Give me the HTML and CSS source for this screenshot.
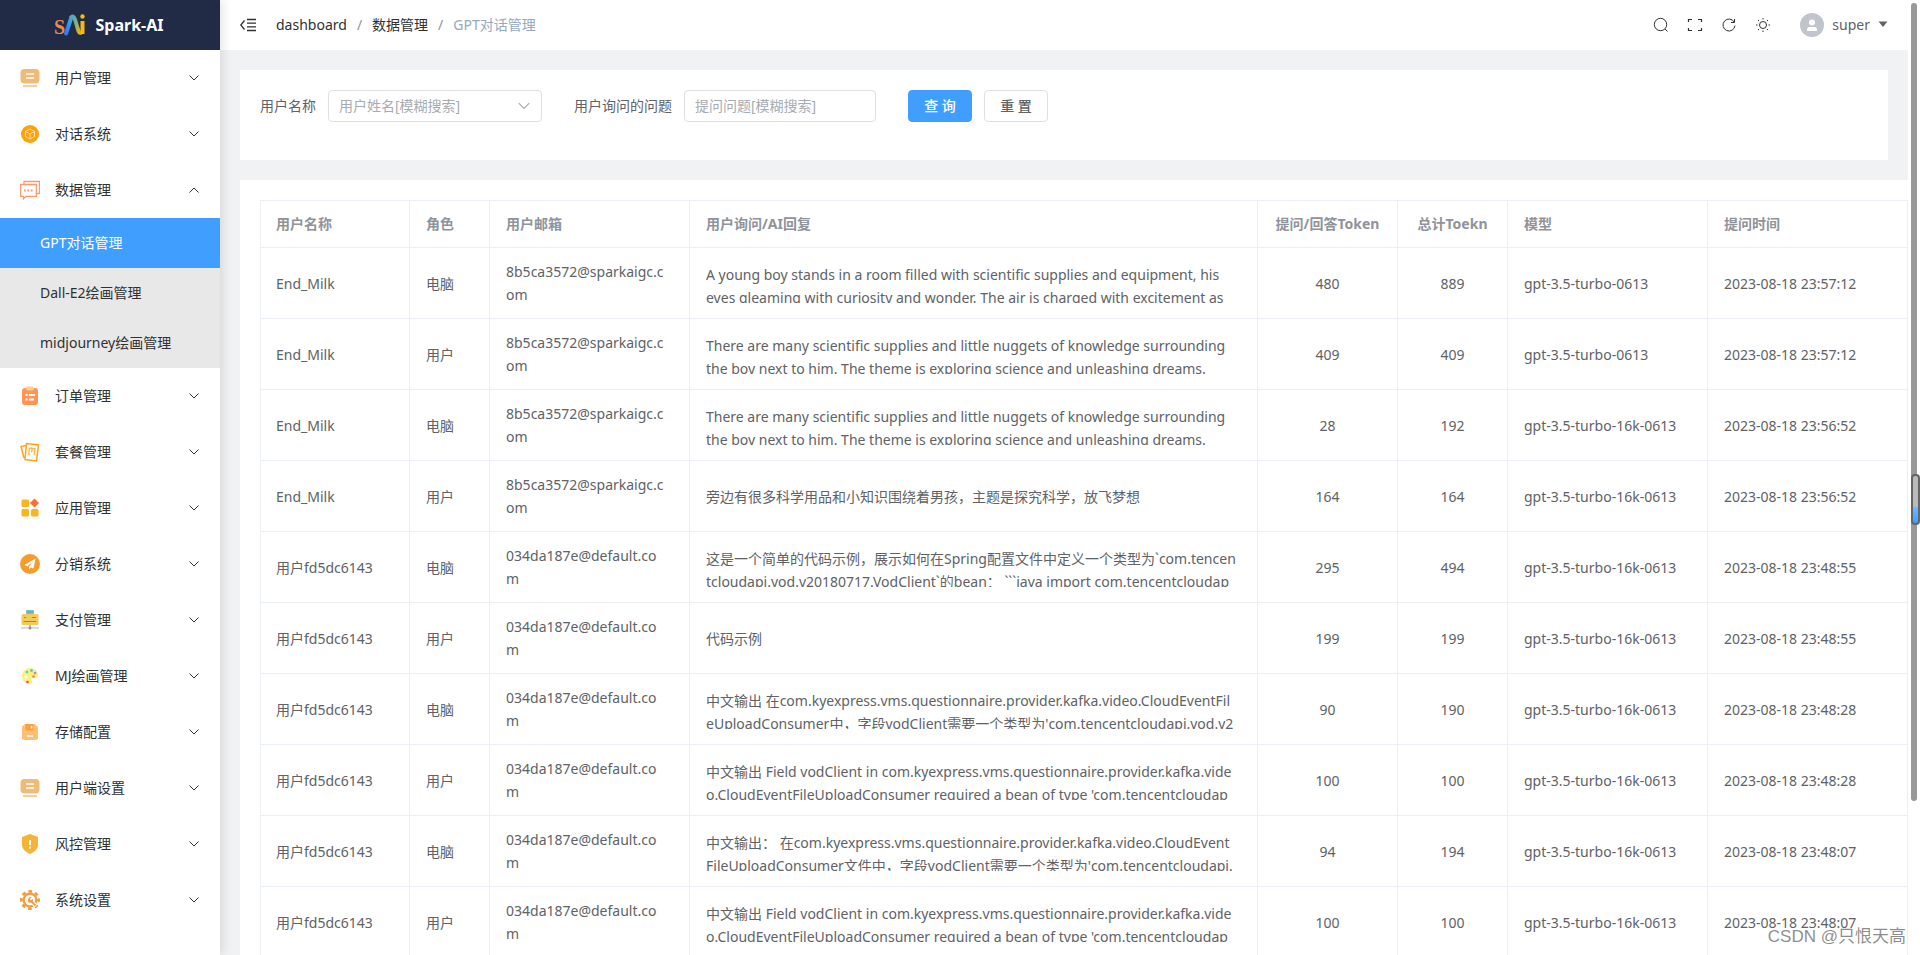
FILE: index.html
```html
<!DOCTYPE html>
<html lang="zh-CN">
<head>
<meta charset="utf-8">
<title>Spark-AI</title>
<link rel="stylesheet" href="styles.css">
</head>
<body>
<svg class="defs" aria-hidden="true">
  <symbol id="down" viewBox="0 0 12 12"><path d="M1.500 3.500 6 8l4.500-4.500" fill="none" stroke="currentColor"/></symbol>
  <symbol id="card" viewBox="0 0 20 20"><rect x="0.500" y="1" width="19" height="14.500" rx="4" fill="#efbb78"/><path d="M6 6h8M6 10h8" stroke="#fff" stroke-width="1.400"/><path d="M3 18h14" stroke="#efbb78" stroke-width="1.400"/></symbol>
</svg>
<div class="app">
  <aside class="sidebar">
    <div class="brand">
      <svg class="logo" viewBox="0 0 32 24" aria-hidden="true">
        <defs>
          <linearGradient id="g1" x1="0" y1="1" x2="1" y2="0"><stop offset="0" stop-color="#2b7cf6"/><stop offset="1" stop-color="#3ca5e8"/></linearGradient>
          <linearGradient id="g2" x1="0" y1="0" x2="1" y2="1"><stop offset="0" stop-color="#46a9c8"/><stop offset=".5" stop-color="#8fae6c"/><stop offset="1" stop-color="#f7b500"/></linearGradient>
        </defs>
        <text x="0" y="21" class="logo-s">S</text>
        <path d="M12 20.500 17 5.500" stroke="url(#g1)" stroke-width="4" stroke-linecap="round"/>
        <path d="M16.500 5Q19.500 1.500 21 6.500L24.500 18q1 2.500 3 1.500" fill="none" stroke="url(#g2)" stroke-width="4"/>
        <path d="M28.500 8v13" stroke="#f8b913" stroke-width="4"/>
        <circle cx="28.500" cy="3.500" r="2.200" fill="#f8b913"/>
      </svg>
      <span>Spark-AI</span>
    </div>
    <nav class="menu">
      <a class="item" href="#"><svg class="ico"><use href="#card"/></svg><span>用户管理</span><svg class="arrow"><use href="#down"/></svg></a>
      <a class="item" href="#"><svg class="ico" viewBox="0 0 20 20"><circle cx="10" cy="10" r="9" fill="#ffa10a"/><path d="m10 5 4.500 2.500v5L10 15l-4.500-2.500v-5zM5.500 7.500 10 10l4.500-2.500M10 10v5" fill="none" stroke="#ffe2b0"/></svg><span>对话系统</span><svg class="arrow"><use href="#down"/></svg></a>
      <a class="item" href="#"><svg class="ico" viewBox="0 0 20 20"><path d="M4 4V1.500h15.500v12H17M.7 4.500h15.600v11.800H6l-2.500 2.500v-2.500H.7z" fill="none" stroke="#fb9a6d" stroke-width="1.300"/><path d="M4 10.500h9" stroke="#fb9a6d" stroke-width="1.800" stroke-dasharray="1.800 1.600"/></svg><span>数据管理</span><svg class="arrow up"><use href="#down"/></svg></a>
      <div class="sub">
        <a class="sub-item active" href="#">GPT对话管理</a>
        <a class="sub-item" href="#">Dall-E2绘画管理</a>
        <a class="sub-item" href="#">midjourney绘画管理</a>
      </div>
      <a class="item" href="#"><svg class="ico" viewBox="0 0 20 20"><rect x="2" y="2" width="16" height="17" rx="3" fill="#ff9552"/><rect x="6" y="0.500" width="8" height="4" rx="2" fill="#ffd08a"/><path d="M5.500 9h2M9 9h6M5.500 13.500h2M9 13.500h5" stroke="#fff" stroke-width="2"/></svg><span>订单管理</span><svg class="arrow"><use href="#down"/></svg></a>
      <a class="item" href="#"><svg class="ico" viewBox="0 0 20 20"><path d="m6.500 1.500 12 1.500-2 16L5 17.500zM5.500 3.500 1 4.500 4 16" fill="none" stroke="#ffa51c" stroke-width="1.500"/><path d="m9.500 6-.8 7M9.500 6l5.500.6-.8 6.500M12.200 6.400l-.6 4" fill="none" stroke="#ffb64b" stroke-width="1.400"/></svg><span>套餐管理</span><svg class="arrow"><use href="#down"/></svg></a>
      <a class="item" href="#"><svg class="ico" viewBox="0 0 20 20"><rect x="1.500" y="1.500" width="7.500" height="7.500" rx="1.500" fill="#ffb31a"/><rect x="1.500" y="11" width="7.500" height="7.500" rx="1.500" fill="#ffb31a"/><rect x="11" y="11" width="7.500" height="7.500" rx="1.500" fill="#ffb31a"/><path d="m14.500.5 4.500 4.500-4.500 4.500L10 5z" fill="#ff6f2c"/></svg><span>应用管理</span><svg class="arrow"><use href="#down"/></svg></a>
      <a class="item" href="#"><svg class="ico" viewBox="0 0 20 20"><circle cx="10" cy="10" r="10" fill="#f59c2f"/><path d="m15.500 4.500-11 6.500 3 1.200L13 7.500l-4 5.200V15.500l1.800-2 2.700 1z" fill="#fff"/></svg><span>分销系统</span><svg class="arrow"><use href="#down"/></svg></a>
      <a class="item" href="#"><svg class="ico" viewBox="0 0 20 20"><rect x="6" y="0" width="8" height="6" rx="1" fill="#79c3cf"/><path d="M7.500 2h5" stroke="#3f7f8b" stroke-dasharray="1 1"/><rect x="1.500" y="4" width="17" height="11" rx="1.500" fill="#f2cb5c"/><path d="M4 7.500h2M12 7.500h4M3.500 11.500h13" stroke="#a8893c"/><path d="M1 18h18" stroke="#b9b4b4"/><path d="M10 15v3" stroke="#8b7a80"/><circle cx="10" cy="18" r="1.500" fill="#a08c92"/></svg><span>支付管理</span><svg class="arrow"><use href="#down"/></svg></a>
      <a class="item" href="#"><svg class="ico" viewBox="0 0 20 20"><path d="M10 2c5 0 8.500 3 8 7.500-.4 3-3 3-4.500 2.500-2-.5-2.500 1-1.500 3s-.5 3.500-3 3C4.500 17.500 2 14 2 10.500 2 6 5.500 2 10 2z" fill="#fdf07b"/><circle cx="7" cy="6" r="1.300" fill="#4cd1ae"/><circle cx="11.500" cy="4.500" r="1.300" fill="#42b5ea"/><circle cx="15" cy="7" r="1.300" fill="#a98ad5"/><circle cx="13.500" cy="10.500" r="1.200" fill="#f4716d"/><circle cx="6" cy="11" r="1.800" fill="#fff"/><circle cx="7.500" cy="16" r="1.300" fill="#ef5350"/></svg><span>MJ绘画管理</span><svg class="arrow"><use href="#down"/></svg></a>
      <a class="item" href="#"><svg class="ico" viewBox="0 0 20 20"><path d="M5 2h9.500L18 5v10.500a2.500 2.500 0 0 1-2.500 2.500h-11A2.500 2.500 0 0 1 2 15.500v-11Z" fill="#ffbe73"/><path d="M5.500 2h8v5a1.500 1.500 0 0 1-1.500 1.500H7A1.500 1.500 0 0 1 5.500 7z" fill="#ff9f3e"/><path d="M11.500 4v2.500M7 14h6" stroke="#fff" stroke-width="1.500"/></svg><span>存储配置</span><svg class="arrow"><use href="#down"/></svg></a>
      <a class="item" href="#"><svg class="ico"><use href="#card"/></svg><span>用户端设置</span><svg class="arrow"><use href="#down"/></svg></a>
      <a class="item" href="#"><svg class="ico" viewBox="0 0 20 20"><path d="m10 0 8 3v8c0 4-3.500 7-8 9-4.500-2-8-5-8-9V3z" fill="#f7b337"/><path d="M10 6v5M10 12.500v2" stroke="#fff" stroke-width="2"/></svg><span>风控管理</span><svg class="arrow"><use href="#down"/></svg></a>
      <a class="item" href="#"><svg class="ico" viewBox="0 0 20 20"><circle cx="10" cy="10" r="6.300" fill="none" stroke="#f59c38" stroke-width="2.200"/><circle cx="10" cy="10" r="8.600" fill="none" stroke="#f59c38" stroke-width="2.800" stroke-dasharray="3.600 3.150" stroke-dashoffset="1.800"/><path d="m11 11 5 5" stroke="#fff" stroke-width="4"/><path d="M11.500 7.200 9.800 9l1.200 1.400L13 8.800a3.300 3.300 0 0 1-3.500 4A3 3 0 0 1 11.500 7.200z" fill="#f59c38"/><path d="m10.500 10.500 5 5" stroke="#f59c38" stroke-width="2"/></svg><span>系统设置</span><svg class="arrow"><use href="#down"/></svg></a>
    </nav>
  </aside>
  <div class="page">
    <header class="topbar">
      <button class="icon-btn" aria-label="折叠菜单"><svg width="16" height="16" viewBox="0 0 16 16"><path d="M4.500 3.500.8 8l3.700 4.500M7 2.500h9M7 6.200h9M7 9.800h9M7 13.500h9" fill="none" stroke="currentColor" stroke-width="1.300"/></svg></button>
      <nav class="crumbs"><a href="#">dashboard</a><i>/</i><a href="#">数据管理</a><i>/</i><span>GPT对话管理</span></nav>
      <div class="tools">
        <button class="icon-btn" aria-label="搜索"><svg width="16" height="16" viewBox="0 0 16 16"><circle cx="7.500" cy="7.500" r="6.200" fill="none" stroke="currentColor"/><path d="m12 12 2.500 2.500" stroke="currentColor"/></svg></button>
        <button class="icon-btn" aria-label="全屏"><svg width="16" height="16" viewBox="0 0 16 16"><path d="M1.500 5V2.500H5M11 2.500h3.500V5M14.500 11v2.500H11M5 13.500H1.500V11" fill="none" stroke="currentColor" stroke-width="1.200"/></svg></button>
        <button class="icon-btn" aria-label="刷新"><svg width="16" height="16" viewBox="0 0 16 16"><path d="M13.200 5A6 6 0 1 0 14 8.500M13.500 2v3.500H10" fill="none" stroke="currentColor"/></svg></button>
        <button class="icon-btn" aria-label="主题"><svg width="16" height="16" viewBox="0 0 16 16"><circle cx="8" cy="8" r="3.500" fill="none" stroke="currentColor"/><path d="M8 1v1.500M8 13.500V15M1 8h1.500M13.500 8H15M3 3l1 1M12 12l1 1M3 13l1-1M12 4l1-1" stroke="currentColor"/></svg></button>
        <button class="user"><svg width="24" height="24" viewBox="0 0 24 24"><circle cx="12" cy="12" r="12" fill="#c0c4cc"/><circle cx="12" cy="9.500" r="3" fill="#fff"/><path d="M7 18v-1.500q0-2.500 2.500-2.500h5q2.500 0 2.500 2.500V18z" fill="#fff"/></svg><span>super</span><svg width="10" height="10" viewBox="0 0 10 10"><path d="M.5 1.500h9L5 7z" fill="#606266"/></svg></button>
      </div>
    </header>
    <main class="content">
      <form class="search">
        <div class="field"><label for="name">用户名称</label><div class="select"><select id="name"><option>用户姓名[模糊搜索]</option></select><svg class="caret"><use href="#down"/></svg></div></div>
        <div class="field"><label for="question">用户询问的问题</label><input id="question" type="text" placeholder="提问问题[模糊搜索]"></div>
        <div class="field actions"><button class="btn primary" type="button">查 询</button><button class="btn" type="button">重 置</button></div>
      </form>
      <section class="table-card">
        <table>
          <colgroup><col class="w150"><col class="w80"><col class="w200"><col><col class="w140"><col class="w110"><col class="w200"><col class="w200"></colgroup>
          <thead><tr><th>用户名称</th><th>角色</th><th>用户邮箱</th><th>用户询问/AI回复</th><th class="num">提问/回答Token</th><th class="num">总计Toekn</th><th>模型</th><th>提问时间</th></tr></thead>
          <tbody>
            <tr><td>End_Milk</td><td>电脑</td><td>8b5ca3572@sparkaigc.c<br>om</td><td><div class="clip">A young boy stands in a room filled with scientific supplies and equipment, his<br>eyes gleaming with curiosity and wonder. The air is charged with excitement as</div></td><td class="num">480</td><td class="num">889</td><td>gpt-3.5-turbo-0613</td><td>2023-08-18 23:57:12</td></tr>
            <tr><td>End_Milk</td><td>用户</td><td>8b5ca3572@sparkaigc.c<br>om</td><td><div class="clip">There are many scientific supplies and little nuggets of knowledge surrounding<br>the boy next to him. The theme is exploring science and unleashing dreams.</div></td><td class="num">409</td><td class="num">409</td><td>gpt-3.5-turbo-0613</td><td>2023-08-18 23:57:12</td></tr>
            <tr><td>End_Milk</td><td>电脑</td><td>8b5ca3572@sparkaigc.c<br>om</td><td><div class="clip">There are many scientific supplies and little nuggets of knowledge surrounding<br>the boy next to him. The theme is exploring science and unleashing dreams.</div></td><td class="num">28</td><td class="num">192</td><td>gpt-3.5-turbo-16k-0613</td><td>2023-08-18 23:56:52</td></tr>
            <tr><td>End_Milk</td><td>用户</td><td>8b5ca3572@sparkaigc.c<br>om</td><td><div class="clip">旁边有很多科学用品和小知识围绕着男孩，主题是探究科学，放飞梦想</div></td><td class="num">164</td><td class="num">164</td><td>gpt-3.5-turbo-16k-0613</td><td>2023-08-18 23:56:52</td></tr>
            <tr><td>用户fd5dc6143</td><td>电脑</td><td>034da187e@default.co<br>m</td><td><div class="clip">这是一个简单的代码示例，展示如何在Spring配置文件中定义一个类型为`com.tencen<br>tcloudapi.vod.v20180717.VodClient`的bean： ```java import com.tencentcloudap</div></td><td class="num">295</td><td class="num">494</td><td>gpt-3.5-turbo-16k-0613</td><td>2023-08-18 23:48:55</td></tr>
            <tr><td>用户fd5dc6143</td><td>用户</td><td>034da187e@default.co<br>m</td><td><div class="clip">代码示例</div></td><td class="num">199</td><td class="num">199</td><td>gpt-3.5-turbo-16k-0613</td><td>2023-08-18 23:48:55</td></tr>
            <tr><td>用户fd5dc6143</td><td>电脑</td><td>034da187e@default.co<br>m</td><td><div class="clip">中文输出 在com.kyexpress.vms.questionnaire.provider.kafka.video.CloudEventFil<br>eUploadConsumer中，字段vodClient需要一个类型为'com.tencentcloudapi.vod.v2</div></td><td class="num">90</td><td class="num">190</td><td>gpt-3.5-turbo-16k-0613</td><td>2023-08-18 23:48:28</td></tr>
            <tr><td>用户fd5dc6143</td><td>用户</td><td>034da187e@default.co<br>m</td><td><div class="clip">中文输出 Field vodClient in com.kyexpress.vms.questionnaire.provider.kafka.vide<br>o.CloudEventFileUploadConsumer required a bean of type 'com.tencentcloudap</div></td><td class="num">100</td><td class="num">100</td><td>gpt-3.5-turbo-16k-0613</td><td>2023-08-18 23:48:28</td></tr>
            <tr><td>用户fd5dc6143</td><td>电脑</td><td>034da187e@default.co<br>m</td><td><div class="clip">中文输出： 在com.kyexpress.vms.questionnaire.provider.kafka.video.CloudEvent<br>FileUploadConsumer文件中，字段vodClient需要一个类型为'com.tencentcloudapi.</div></td><td class="num">94</td><td class="num">194</td><td>gpt-3.5-turbo-16k-0613</td><td>2023-08-18 23:48:07</td></tr>
            <tr><td>用户fd5dc6143</td><td>用户</td><td>034da187e@default.co<br>m</td><td><div class="clip">中文输出 Field vodClient in com.kyexpress.vms.questionnaire.provider.kafka.vide<br>o.CloudEventFileUploadConsumer required a bean of type 'com.tencentcloudap</div></td><td class="num">100</td><td class="num">100</td><td>gpt-3.5-turbo-16k-0613</td><td>2023-08-18 23:48:07</td></tr>
          </tbody>
        </table>
      </section>
    </main>
  </div>
</div>
<div class="scroll-thumb"></div>
<div class="gauge"></div>
<div class="watermark">CSDN @只恨天高</div>
</body>
</html>
```
FILE: styles.css
```css
* { box-sizing: border-box; }
body {
  margin: 0;
  overflow: hidden;
  background: #fff;
  color: #303133;
  font: 14px/23px "Noto Sans", "Noto Sans CJK SC", sans-serif;
}
a { color: inherit; text-decoration: none; }
button, input, select { font: inherit; color: inherit; }
.defs { position: absolute; width: 0; height: 0; }

.app { display: flex; height: 100vh; padding-right: 12px; }

/* Sidebar */
.sidebar {
  flex: 0 0 220px;
  z-index: 1;
  background: #fff;
  box-shadow: 2px 0 10px rgba(0, 0, 0, .12);
}
.brand {
  display: flex;
  align-items: center;
  justify-content: center;
  gap: 9px;
  height: 50px;
  padding-right: 2px;
  background: #222b45;
  color: #fff;
  font-size: 16px;
  font-weight: 700;
}
.logo { width: 32px; height: 24px; }
.logo-s { font: 700 20px "Liberation Serif", serif; fill: #f08a4b; }
.item { display: flex; align-items: center; height: 56px; padding: 0 20px; }
.item span { padding-bottom: 2px; }
.ico { width: 20px; height: 20px; margin-right: 15px; }
.arrow { width: 12px; height: 12px; margin-left: auto; }
.arrow.up { transform: rotate(180deg); }
.sub { background: #e8e8e8; }
.sub-item { display: flex; align-items: center; height: 50px; padding: 0 0 2px 40px; }
.sub-item.active { background: #409eff; color: #fff; }

/* Top bar */
.page { flex: 1; min-width: 0; display: flex; flex-direction: column; overflow: hidden; }
.topbar { flex: none; display: flex; align-items: center; height: 50px; padding: 0 20px; }
.icon-btn { display: flex; padding: 0; border: 0; background: none; }
.crumbs { display: flex; gap: 10px; margin-left: 20px; padding-bottom: 2px; }
.crumbs i { color: #909399; font-style: normal; }
.crumbs span { color: #97a8be; }
.tools { display: flex; align-items: center; gap: 18px; margin-left: auto; }
.user {
  display: flex;
  align-items: center;
  gap: 8px;
  margin-left: 11px;
  padding: 0;
  border: 0;
  background: none;
  color: #606266;
}
.user span { padding-bottom: 2px; }

/* Content */
.content { flex: 1; min-height: 0; overflow: hidden; padding: 20px; background: #f1f2f4; }
.search {
  display: flex;
  gap: 32px;
  height: 90px;
  padding: 20px;
  background: #fff;
  color: #606266;
}
.field { display: flex; align-items: center; gap: 12px; height: 32px; }
.field label { padding-bottom: 2px; }
.select { display: flex; position: relative; width: 214px; }
.select select, .field input {
  height: 32px;
  padding: 0 10px 2px;
  border: 1px solid #dcdfe6;
  border-radius: 4px;
  background: #fff;
  color: #a8abb2;
}
.select select { width: 100%; appearance: none; }
.field input { width: 192px; }
.field input::placeholder { color: #a8abb2; }
.caret { position: absolute; right: 11px; top: 9px; width: 14px; height: 14px; color: #a8abb2; }
.btn {
  width: 64px;
  height: 32px;
  padding: 0 0 2px;
  border: 1px solid #dcdfe6;
  border-radius: 4px;
  background: #fff;
  font-weight: 500;
}
.btn.primary { border-color: #409eff; background: #409eff; color: #fff; }

/* Table */
.table-card { margin: 20px -20px 0 0; padding: 20px 0 20px 20px; background: #fff; }
table {
  width: 100%;
  table-layout: fixed;
  border-collapse: separate;
  border-spacing: 0;
  color: #606266;
}
.w80 { width: 80px; }
.w110 { width: 110px; }
.w140 { width: 140px; }
.w150 { width: 150px; }
.w200 { width: 200px; }
th, td {
  padding: 12px 16px;
  border: 0 solid #ebeef5;
  border-width: 0 1px 1px 0;
  text-align: left;
  white-space: nowrap;
}
th { padding-top: 11px; border-top-width: 1px; color: #909399; font-weight: 700; }
td { height: 71px; }
th:first-child, td:first-child { border-left-width: 1px; padding-left: 15px; }
.num { padding: 12px 0; text-align: center; }
th.num { padding-top: 11px; }
.clip { max-height: 40px; overflow: hidden; }

/* Overlays */
.scroll-thumb {
  position: absolute;
  top: 3px;
  right: 3px;
  width: 6px;
  height: 798px;
  border-radius: 3px;
  background: #999;
}
.gauge {
  position: absolute;
  top: 474px;
  right: 0;
  width: 9px;
  height: 51px;
  border: 2px solid #666;
  border-radius: 4px;
  background: linear-gradient(#bbb 66%, #6cbcff 66%, #409eff);
}
.watermark {
  position: absolute;
  right: 14px;
  bottom: 6px;
  color: rgba(120, 120, 120, .85);
  font: 17px/24px "Liberation Sans", "Noto Sans CJK SC", sans-serif;
  text-shadow: 1px 1px 0 #fff;
}
```
